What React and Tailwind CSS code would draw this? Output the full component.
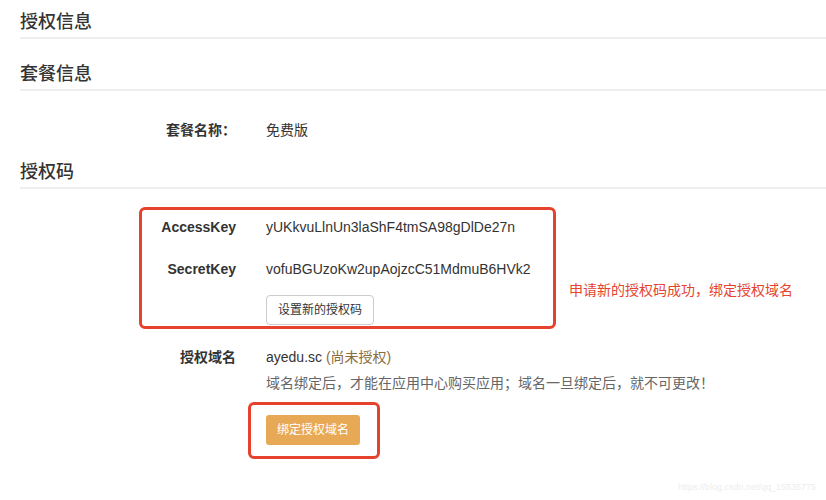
import React from 'react';

const FONT = { fontFamily: '"Liberation Sans", Arial, "Noto Sans CJK SC", sans-serif' };

function SectionTitle({ children, className = '' }) {
  return (
    <h3 className={`text-[18px] leading-[26px] text-[#333] font-medium pb-[2px] border-b-2 border-[#eeeeee] ${className}`}>
      {children}
    </h3>
  );
}

export default function App() {
  return (
    <div className="w-[826px] h-[500px] bg-white overflow-hidden relative" style={FONT}>
      <div className="pl-[20px] pt-[9px]">
        <SectionTitle>授权信息</SectionTitle>
        <SectionTitle className="mt-[22px]">套餐信息</SectionTitle>

        {/* plan */}
        <div className="flex mt-[29px] text-[14px] leading-[20px] text-[#333]">
          <div className="w-[216px] text-right font-bold">套餐名称：</div>
          <div className="pl-[30px]">免费版</div>
        </div>

        <SectionTitle className="mt-[19px]">授权码</SectionTitle>

        {/* keys, highlighted */}
        <div className="flex items-start mt-[18px]">
          <div className="ml-[119px] w-[417px] border-[3px] border-[#e5432e] rounded-[6px] pt-[7px] pb-[1px] text-[14px] leading-[20px] text-[#333]">
            <div className="flex">
              <div className="w-[94px] text-right font-bold">AccessKey</div>
              <div className="pl-[30px]">yUKkvuLlnUn3laShF4tmSA98gDlDe27n</div>
            </div>
            <div className="flex mt-[22px]">
              <div className="w-[94px] text-right font-bold">SecretKey</div>
              <div className="pl-[30px]">vofuBGUzoKw2upAojzcC51MdmuB6HVk2</div>
            </div>
            <div className="flex mt-[16px]">
              <div className="w-[94px]" />
              <div className="pl-[30px]">
                <button className="h-[30px] px-[11px] text-[12px] text-[#333] bg-white border border-[#ccc] rounded-[4px]">
                  设置新的授权码
                </button>
              </div>
            </div>
          </div>
          <div className="ml-[13px] mt-[73px] text-[14px] leading-[20px] text-[#e5432e]">
            申请新的授权码成功，绑定授权域名
          </div>
        </div>

        {/* domain */}
        <div className="flex mt-[18px] text-[14px] leading-[20px] text-[#333]">
          <div className="w-[216px] text-right font-bold">授权域名</div>
          <div className="pl-[30px]">
            <div>
              ayedu.sc <span className="text-[#8a6d3b]">(尚未授权)</span>
            </div>
            <div className="mt-[6px] text-[#666]">
              域名绑定后，才能在应用中心购买应用；域名一旦绑定后，就不可更改！
            </div>
          </div>
        </div>

        <div className="ml-[228px] mt-[9px] w-[132px] border-[3px] border-[#e5432e] rounded-[6px] pt-[10px] pb-[11px] pl-[15px]">
          <button className="h-[30px] w-[94px] text-[12px] text-white bg-[#e8a957] rounded-[3px]">
            绑定授权域名
          </button>
        </div>
      </div>

      <div className="absolute right-[10px] bottom-[6px] text-[9px] text-[#ededed]">
        https://blog.csdn.net/qq_15535775
      </div>
    </div>
  );
}
